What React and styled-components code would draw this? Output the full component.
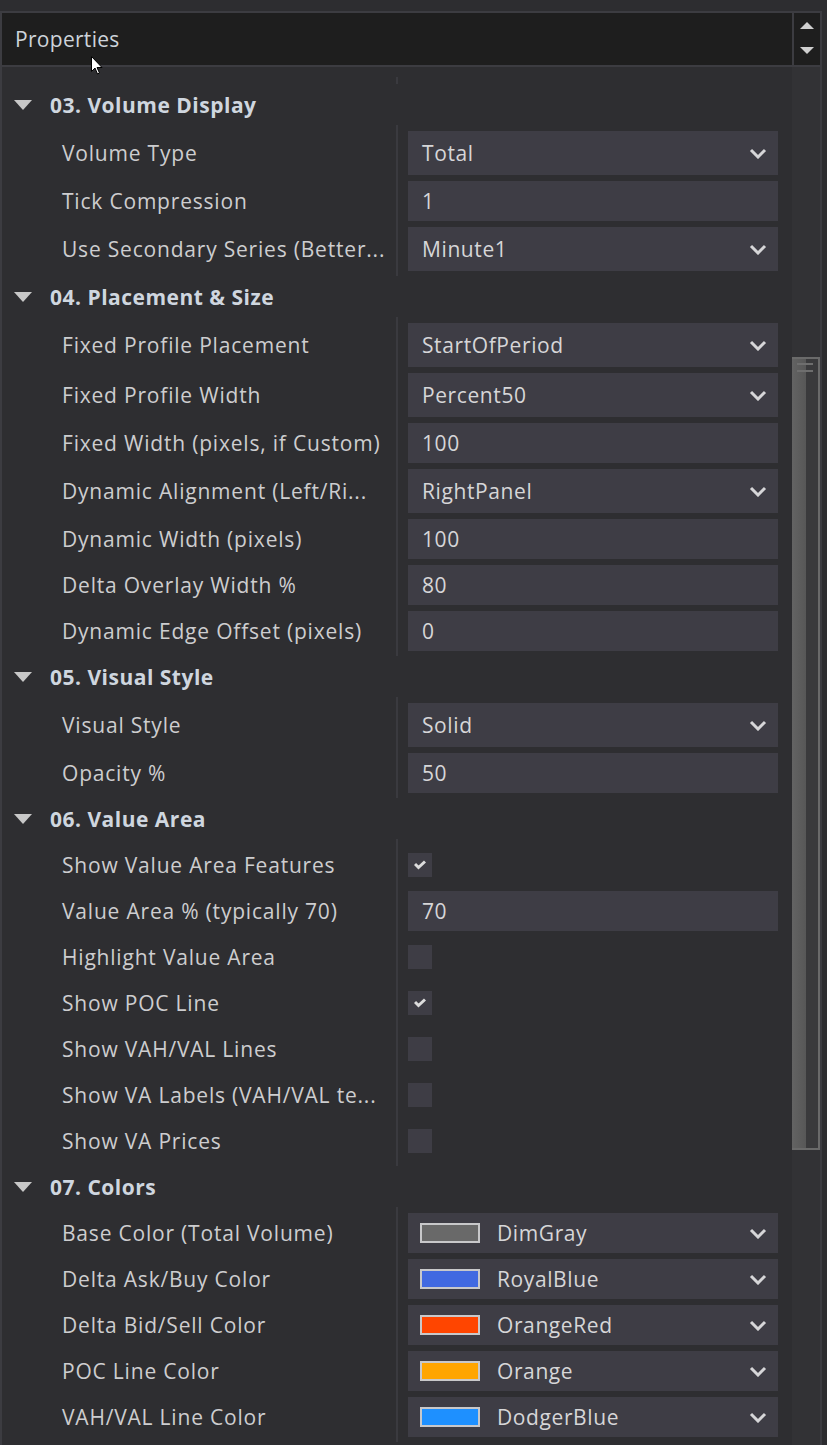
import React from 'react';
import styled, { createGlobalStyle } from 'styled-components';

const GlobalStyle = createGlobalStyle`
  html, body {
    margin: 0;
    padding: 0;
    background: #2d2d30;
    overflow: hidden;
  }
  body {
    font-family: "Open Sans", "Noto Sans", sans-serif;
  }
`;

const sections = [
  {
    title: '03. Volume Display',
    rows: [
      { label: 'Volume Type', type: 'select', value: 'Total' },
      { label: 'Tick Compression', type: 'text', value: '1' },
      { label: 'Use Secondary Series (Better...', type: 'select', value: 'Minute1' },
    ],
  },
  {
    title: '04. Placement & Size',
    rows: [
      { label: 'Fixed Profile Placement', type: 'select', value: 'StartOfPeriod' },
      { label: 'Fixed Profile Width', type: 'select', value: 'Percent50' },
      { label: 'Fixed Width (pixels, if Custom)', type: 'text', value: '100' },
      { label: 'Dynamic Alignment (Left/Ri...', type: 'select', value: 'RightPanel' },
      { label: 'Dynamic Width (pixels)', type: 'text', value: '100' },
      { label: 'Delta Overlay Width %', type: 'text', value: '80' },
      { label: 'Dynamic Edge Offset (pixels)', type: 'text', value: '0' },
    ],
  },
  {
    title: '05. Visual Style',
    rows: [
      { label: 'Visual Style', type: 'select', value: 'Solid' },
      { label: 'Opacity %', type: 'text', value: '50' },
    ],
  },
  {
    title: '06. Value Area',
    rows: [
      { label: 'Show Value Area Features', type: 'check', value: true },
      { label: 'Value Area % (typically 70)', type: 'text', value: '70' },
      { label: 'Highlight Value Area', type: 'check', value: false },
      { label: 'Show POC Line', type: 'check', value: true },
      { label: 'Show VAH/VAL Lines', type: 'check', value: false },
      { label: 'Show VA Labels (VAH/VAL te...', type: 'check', value: false },
      { label: 'Show VA Prices', type: 'check', value: false },
    ],
  },
  {
    title: '07. Colors',
    rows: [
      { label: 'Base Color (Total Volume)', type: 'color', value: 'DimGray', swatch: '#696969' },
      { label: 'Delta Ask/Buy Color', type: 'color', value: 'RoyalBlue', swatch: '#4169e1' },
      { label: 'Delta Bid/Sell Color', type: 'color', value: 'OrangeRed', swatch: '#ff4500' },
      { label: 'POC Line Color', type: 'color', value: 'Orange', swatch: '#ffa500' },
      { label: 'VAH/VAL Line Color', type: 'color', value: 'DodgerBlue', swatch: '#1e90ff' },
    ],
  },
];

const Panel = styled.div`
  position: relative;
  margin-top: 11px;
  width: 818px;
  border: 2px solid #3c3c41;
  border-bottom: none;
  background: #2e2e31;
`;

const Header = styled.div`
  display: flex;
  height: 52px;
  border-bottom: 2px solid #3c3c41;
  background: #1e1e1e;
`;

const Title = styled.div`
  flex: 1;
  display: flex;
  align-items: center;
  padding-left: 13px;
  padding-bottom: 1px;
  font-size: 21px;
  letter-spacing: 0.3px;
  color: #cdd3da;
  border-right: 2px solid #3c3c41;
`;

const Arrows = styled.div`
  width: 26px;
  display: flex;
  flex-direction: column;
  align-items: center;
  justify-content: space-between;
  padding: 9px 0 11px;
`;

const Tri = styled.div`
  width: 0;
  height: 0;
  border-left: 7px solid transparent;
  border-right: 7px solid transparent;
  ${(p) => (p.$up ? 'border-bottom: 7px solid #cfcfcf;' : 'border-top: 7px solid #cfcfcf;')}
`;

const Body = styled.div`
  display: flex;
  height: 1378px;
  overflow: hidden;
`;

const Content = styled.div`
  flex: 1;
  background: #2e2e31;
`;

const Tail = styled.div`
  height: 17px;
  background: linear-gradient(#3a3a3f, #3a3a3f) no-repeat 394px 10px / 2px 7px;
`;

const SectionHead = styled.div`
  display: flex;
  align-items: center;
  height: 41px;
`;

const Caret = styled.div`
  margin-left: 12px;
  width: 0;
  height: 0;
  border-left: 9px solid transparent;
  border-right: 9px solid transparent;
  border-top: 10px solid #c8c8c8;
`;

const SectionTitle = styled.div`
  margin-left: 18px;
  font-size: 21px;
  font-weight: 700;
  letter-spacing: 0.5px;
  color: #cfd6df;
`;

const SectionBody = styled.div`
  display: flex;
  flex-direction: column;
  gap: 6px;
  padding: 6px 0 5px;
  background: linear-gradient(#3a3a3f, #3a3a3f) no-repeat 394px 0 / 2px 100%;
`;

const Row = styled.div`
  display: grid;
  grid-template-columns: 396px 1fr;
  align-items: center;
  height: ${(p) => p.$h}px;
`;

const Label = styled.div`
  padding: 0 14px 0 60px;
  font-size: 21px;
  letter-spacing: 0.8px;
  color: #cdcdcf;
  white-space: nowrap;
  overflow: hidden;
`;

const Cell = styled.div`
  display: flex;
  align-items: center;
  height: 100%;
  padding: 0 14px 0 10px;
`;

const Box = styled.div`
  flex: 1;
  display: flex;
  align-items: center;
  height: ${(p) => (p.$tall ? 44 : 40)}px;
  padding: 0 11px 0 12px;
  background: #3e3d45;
`;

const BoxText = styled.div`
  flex: 1;
  font-size: 21px;
  letter-spacing: 0.6px;
  color: #d6d6d8;
  padding-left: 2px;
`;

const Swatch = styled.div`
  width: 56px;
  height: 16px;
  margin-right: 15px;
  border: 2px solid #c8c8ca;
  background: ${(p) => p.$color};
`;

const ChevronSvg = styled.svg`
  width: 18px;
  height: 11px;
`;

const Check = styled.div`
  width: 24px;
  height: 24px;
  display: flex;
  align-items: center;
  justify-content: center;
  background: #3e3d45;
`;

const Track = styled.div`
  width: 28px;
  padding-top: 290px;
  background: #323235;
`;

const Thumb = styled.div`
  height: 785px;
  border: 2px solid #6a6a6a;
  border-left: none;
  background: linear-gradient(to right, #636363 0, #575757 14px, #3a3a3c 14px);
  padding-top: 4px;
  display: flex;
  flex-direction: column;
  align-items: center;
  gap: 5px;
`;

const Grip = styled.div`
  width: 16px;
  height: 2px;
  background: #6e6e6e;
`;

const Cursor = styled.svg`
  position: absolute;
  left: 89px;
  top: 43px;
  width: 12px;
  height: 19px;
`;

const Chevron = () => (
  <ChevronSvg viewBox="0 0 18 11">
    <path d="M2 2 L9 9 L16 2" fill="none" stroke="#d6d6d8" strokeWidth="3" />
  </ChevronSvg>
);

const CheckMark = () => (
  <svg width="12" height="10" viewBox="0 0 12 10">
    <path d="M1 4 L4.5 7.5 L11 1.5" fill="none" stroke="#dcdcdc" strokeWidth="3" />
  </svg>
);

const Value = ({ row }) => {
  if (row.type === 'check') {
    return <Check>{row.value && <CheckMark />}</Check>;
  }
  return (
    <Box $tall={row.type === 'select'}>
      {row.type === 'color' && <Swatch $color={row.swatch} />}
      <BoxText>{row.value}</BoxText>
      {(row.type === 'select' || row.type === 'color') && <Chevron />}
    </Box>
  );
};

const App = () => (
  <>
    <GlobalStyle />
    <Panel>
      <Header>
        <Title>Properties</Title>
        <Arrows>
          <Tri $up />
          <Tri />
        </Arrows>
      </Header>
      <Body>
        <Content>
          <Tail />
          {sections.map((section) => (
            <div key={section.title}>
              <SectionHead>
                <Caret />
                <SectionTitle>{section.title}</SectionTitle>
              </SectionHead>
              <SectionBody>
                {section.rows.map((row) => (
                  <Row key={row.label} $h={row.type === 'select' ? 44 : 40}>
                    <Label>{row.label}</Label>
                    <Cell>
                      <Value row={row} />
                    </Cell>
                  </Row>
                ))}
              </SectionBody>
            </div>
          ))}
        </Content>
        <Track>
          <Thumb>
            <Grip />
            <Grip />
          </Thumb>
        </Track>
      </Body>
      <Cursor viewBox="0 0 12 19">
        <path d="M0.5 0.5 L0.5 15.5 L4 12 L6.5 18 L8.5 17 L6 11.5 L11 11.5 Z" fill="#fff" stroke="#000" strokeWidth="1" />
      </Cursor>
    </Panel>
  </>
);

export default App;
